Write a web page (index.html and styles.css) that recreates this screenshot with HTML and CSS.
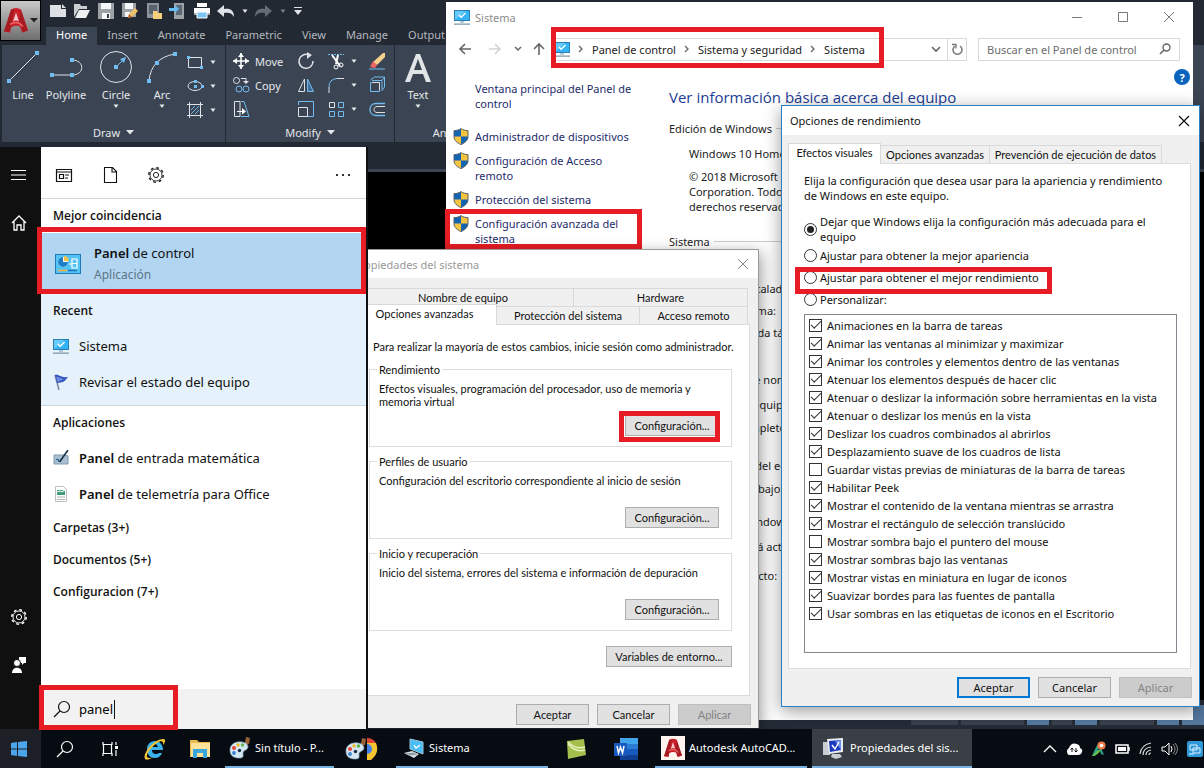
FILE: index.html
```html
<!DOCTYPE html>
<html lang="es">
<head>
<meta charset="utf-8">
<title>Escritorio</title>
<link rel="stylesheet" href="styles.css">
</head>
<body>
<svg class="defs" aria-hidden="true">
  <symbol id="monitor" viewBox="0 0 16 16">
    <rect x=".5" y="1.5" width="15" height="10" fill="#35b4f5" stroke="#2a7db5"/>
    <path d="M1 11V2h10z" fill="#67cbfa"/>
    <path d="M5 6l2.2 2.3L11.5 4" fill="none" stroke="#fff" stroke-width="1.5"/>
    <path d="M6 13h4M0 15.2h16" stroke="#7d97a8" stroke-width="1.2"/>
  </symbol>
  <symbol id="shield" viewBox="0 0 16 17">
    <path d="M8 .6c2 1.5 4.500 2 7 2v6c0 4-3.500 6.400-7 8-3.500-1.600-7-4-7-8v-6c2.500 0 5-.5 7-2z" fill="#f6c33c"/>
    <path d="M8 .6v8H1v-6c2.500 0 5-.5 7-2zM8 8.600h7c0 4-3.500 6.400-7 8z" fill="#1464b4"/>
    <path d="M8 .6c2 1.500 4.500 2 7 2v6c0 4-3.500 6.400-7 8-3.500-1.600-7-4-7-8v-6c2.500 0 5-.5 7-2z" fill="none" stroke="#56606a"/>
  </symbol>
  <symbol id="gear" viewBox="0 0 18 18">
    <circle cx="9" cy="9" r="7.200" fill="none" stroke="currentColor" stroke-width="1.500" stroke-dasharray="2.800 2.855"/>
    <circle cx="9" cy="9" r="6" fill="none" stroke="currentColor" stroke-width=".9"/>
    <circle cx="9" cy="9" r="2.600" fill="none" stroke="currentColor"/>
  </symbol>
  <symbol id="lens" viewBox="0 0 18 18">
    <circle cx="11" cy="7" r="5.500" fill="none" stroke="currentColor" stroke-width="1.200"/>
    <path d="M7 11l-6 6" stroke="currentColor" stroke-width="1.200"/>
  </symbol>
  <symbol id="acad" viewBox="0 0 24 26">
    <path d="M0 24L7 2q5-3 10 0l7 21-6 2-2-6q-5-2-9 1l-1 5z" fill="#c8202b"/>
    <path d="M9 14q3-2 6 0l-3-9z" fill="#fff" opacity=".75"/>
    <path d="M0 24L7 2l3 0-4 22zM15 13l4 12 5-2L17 3z" fill="#8d151c" opacity=".55"/>
    <path d="M6 17q7-5 13 2" fill="none" stroke="#ee6b66" stroke-width="1.500"/>
  </symbol>
  <symbol id="paint" viewBox="0 0 22 22">
    <path d="M13 13l5-12 2 0 0 3-5 11z" fill="#c98a4d"/>
    <path d="M16 6l1-6 4 1-1 6z" fill="#9b6238"/>
    <path d="M1 13C1 7 7 4 13 5c6 1 7 5 5 7s-4 1-4 4 1 5-4 5S1 19 1 13z" fill="#d5e7f3" stroke="#8aa9bd" stroke-width=".7"/>
    <circle cx="5" cy="11" r="2" fill="#e6473a"/><circle cx="9" cy="8" r="1.800" fill="#f0bd2f"/><circle cx="13.500" cy="8" r="1.700" fill="#61b448"/><circle cx="5" cy="16" r="1.900" fill="#3b83d5"/><circle cx="10.500" cy="13.500" r="1.700" fill="#152c47"/>
  </symbol>
  <symbol id="down" viewBox="0 0 8 5"><path d="M1.500 .5h5L4 4z" fill="currentColor"/></symbol>
  <symbol id="down-wide" viewBox="0 0 8 5"><path d="M0 0h8L4 4.500z" fill="currentColor"/></symbol>
</svg>

<main class="desktop">
  <section class="cad" aria-label="AutoCAD">
    <header class="cad-head">
      <button class="cad-logo" aria-label="AutoCAD"><svg width="24" height="27"><use href="#acad"/></svg><svg width="8" height="5"><use href="#down-wide"/></svg></button>
      <div class="cad-top">
        <div class="quick">
          <svg width="18" height="16"><path d="M1 2h11v4h5v8H1zM13 1l4 4h-4z" fill="#dde1e5"/></svg>
          <svg width="18" height="16"><path d="M1 14V1h6l1 2h6v3H6z" fill="#c9cdd1"/><path d="M2 15L6 7h11l-4 8z" fill="#eef0f2"/></svg>
          <svg width="18" height="16"><path d="M1 0h16v16H1z" fill="#9da2a7"/><path d="M4 0h10v6H4zM5 10h8v6H5z" fill="#f6f7f8"/><path d="M10 11h2v4h-2z" fill="#333b47"/></svg>
          <svg width="18" height="16"><path d="M1 0h14v14H1z" fill="#9da2a7"/><path d="M4 0h8v6H4zM4 9h5v5H4z" fill="#f6f7f8"/><path d="M7 15l1-4 6-6 3 3-6 6z" fill="#f0c26c"/><path d="M7 15l1-4 3 3z" fill="#b9552e"/></svg>
          <svg width="18" height="16"><path d="M2 0h12v15H2z" fill="#8e949a"/><path d="M4 2h8v9H4z" fill="#596473"/><path d="M8 16V8h4l1 2h4v6z" fill="#f7cf7b"/></svg>
          <svg width="18" height="16"><path d="M5 0h10v16H5z" fill="#9da2a7"/><path d="M7 2h6v10H7z" fill="#5b6878"/><path d="M0 5h6V2l4 4-4 4V8H0z" fill="#67bdf2"/></svg>
          <svg width="18" height="16"><path d="M4 0h10v4H4zM1 5h16v7H1z" fill="#fff"/><path d="M1 10h16v2H1z" fill="#a9aeb4"/><path d="M4 9h10v6H4z" fill="#7cc4f5" stroke="#fff"/></svg>
          <svg width="18" height="16"><path d="M0 8l7-6v4c6-1 10 1 10 8-2-4-5-5-10-4v4z" fill="#dfe2e6"/></svg>
          <svg width="8" height="5"><use href="#down"/></svg>
          <svg width="18" height="16"><path d="M17 8l-7-6v4C4 5 0 7 0 14c2-4 5-5 10-4v4z" fill="#646c77"/></svg>
          <svg class="dim" width="8" height="5"><use href="#down"/></svg>
          <svg width="10" height="10"><path d="M1 1h8v1H1zM1 4h8L5 9z" fill="#dfe2e6"/></svg>
        </div>
        <nav class="cad-tabs">
          <a href="#" class="on">Home</a><a href="#">Insert</a><a href="#">Annotate</a><a href="#">Parametric</a><a href="#">View</a><a href="#">Manage</a><a href="#">Output</a>
        </nav>
      </div>
    </header>
    <div class="ribbon">
      <section class="panel draw">
        <div class="tools">
          <button class="big w42"><svg width="34" height="34"><path d="M3 31L31 3" stroke="#dfe3e7"/><path d="M1 29h4v4H1zM29 1h4v4h-4z" fill="#71bdf2"/></svg>Line</button>
          <button class="big w44"><svg width="34" height="34"><path d="M3 25h20c13 0 13-15 0-15" fill="none" stroke="#dfe3e7"/><path d="M1 23h4v4H1zM21 23h4v4h-4zM21 8h4v4h-4z" fill="#71bdf2"/></svg>Polyline</button>
          <button class="big w56"><svg width="34" height="34"><circle cx="17" cy="17" r="15.500" fill="none" stroke="#dfe3e7"/><path d="M17 17l8-8" stroke="#71bdf2"/><path d="M15 15h4v4h-4zM21 9l6-2-2 6z" fill="#71bdf2"/></svg>Circle<svg width="8" height="5"><use href="#down"/></svg></button>
          <button class="big w36"><svg width="34" height="34"><path d="M4 31Q6 8 30 4" fill="none" stroke="#dfe3e7"/><path d="M2 29h4v4H2zM10 11h4v4h-4zM28 2h4v4h-4z" fill="#71bdf2"/></svg>Arc<svg width="8" height="5"><use href="#down"/></svg></button>
          <div class="small-col">
            <button aria-label="Rectangle"><svg width="18" height="18"><path d="M2.500 4.500h13v10h-13z" fill="none" stroke="#dfe3e7"/><path d="M1 3h3v3H1zM14 13h3v3h-3z" fill="#71bdf2"/></svg><svg width="8" height="5"><use href="#down"/></svg></button>
            <button aria-label="Ellipse"><svg width="18" height="18"><ellipse cx="9" cy="9" rx="7" ry="4.500" fill="none" stroke="#dfe3e7"/><path d="M8 8h3v3H8zM15 8h3v3h-3zM8 3h3v3H8z" fill="#71bdf2"/></svg><svg width="8" height="5"><use href="#down"/></svg></button>
            <button aria-label="Hatch"><svg width="18" height="18"><path d="M1 3.500h16M1 14.500h16M3.500 1v16M14.500 1v16" stroke="#dfe3e7"/><path d="M5 9l4-4M5 13l8-8M9 13l4-4" stroke="#71bdf2"/></svg><svg width="8" height="5"><use href="#down"/></svg></button>
          </div>
        </div>
        <h2>Draw <svg width="8" height="5"><use href="#down-wide"/></svg></h2>
      </section>
      <section class="panel modify">
        <div class="grid">
          <button><svg width="18" height="18"><path d="M9 1v16M1 9h16" stroke="#fff" stroke-width="1.500"/><path d="M9 1L6 5h6zM9 17l-3-4h6zM1 9l4-3v6zM17 9l-4-3v6z" fill="#fff"/></svg>Move</button>
          <button aria-label="Rotate"><svg width="18" height="18"><path d="M12 3a7 7 0 1 0 4 6" fill="none" stroke="#dfe3e7" stroke-width="1.500"/><path d="M10 0l5 3-5 4z" fill="#dfe3e7"/></svg></button>
          <button aria-label="Trim"><svg width="18" height="18"><path d="M1 2.500h16" stroke="#71bdf2" stroke-dasharray="2 1"/><path d="M5 3l8 11M11 3L9 12" stroke="#fff" stroke-width="2"/><circle cx="14" cy="13" r="2" fill="none" stroke="#fff"/><circle cx="9" cy="15" r="2" fill="none" stroke="#fff"/></svg><svg width="8" height="5"><use href="#down"/></svg></button>
          <button aria-label="Erase"><svg width="18" height="18"><path d="M15 1h2v4l-8 8-4-3z" fill="#f8d28a"/><path d="M5 9l4 4-2 3-5-1z" fill="#ed6464"/><path d="M1 17h16" stroke="#71bdf2"/></svg></button>
          <button><svg width="18" height="18"><g fill="none" stroke="#dfe3e7"><circle cx="4.500" cy="4.500" r="3"/><path d="M9 2.500h5v4"/></g><path d="M11 5h6l-3 3z" fill="#dfe3e7"/><g fill="none" stroke="#71bdf2"><circle cx="7" cy="13" r="3"/><circle cx="14" cy="13" r="3"/></g></svg>Copy</button>
          <button aria-label="Mirror"><svg width="18" height="18"><path d="M7.500 3v12.500h-6z" fill="none" stroke="#dfe3e7"/><path d="M10.500 3v12.500h6z" fill="#3f6f95" stroke="#71bdf2"/></svg></button>
          <button aria-label="Fillet"><svg width="18" height="18"><path d="M2 17v-6M10 2.500h7" stroke="#dfe3e7"/><path d="M2 11Q2 3 10 2.500" fill="none" stroke="#71bdf2"/></svg><svg width="8" height="5"><use href="#down"/></svg></button>
          <button aria-label="Explode"><svg width="18" height="18"><path d="M2.500 6.500h9v9h-9zM2.500 4l4-3h10v10l-3 4M4 4.500h10v9M14 4l3-3" fill="none" stroke="#71bdf2"/><path d="M4.500 6.500h7v8" fill="none" stroke="#dfe3e7"/></svg></button>
          <button aria-label="Stretch"><svg width="18" height="18"><path d="M8 1.500H2.500v15H8V1.500" fill="none" stroke="#dfe3e7"/><path d="M9 1.500h3l5 15H9" fill="none" stroke="#71bdf2"/><path d="M5 11.500h6" stroke="#fff"/><path d="M10 8l4 3.500-4 3z" fill="#fff"/></svg></button>
          <button aria-label="Scale"><svg width="18" height="18"><path d="M1.500 5V1.500h15v15H10" fill="none" stroke="#71bdf2"/><path d="M1.500 7.500h9v9h-9z" fill="none" stroke="#dfe3e7"/></svg></button>
          <button aria-label="Array"><svg width="18" height="18"><path d="M2.500 2.500h5v5h-5z" fill="none" stroke="#dfe3e7"/><path d="M11.500 2.500h5v5h-5zM2.500 11.500h5v5h-5zM11.500 11.500h5v5h-5z" fill="none" stroke="#71bdf2"/></svg><svg width="8" height="5"><use href="#down"/></svg></button>
          <button aria-label="Offset"><svg width="18" height="18"><path d="M17 3.500H8c-8 0-8 12 0 12h9" fill="none" stroke="#71bdf2" stroke-width="1.300"/><path d="M17 6.500H9c-4 0-4 6 0 6h8" fill="none" stroke="#dfe3e7"/></svg></button>
        </div>
        <h2>Modify <svg width="8" height="5"><use href="#down-wide"/></svg></h2>
      </section>
      <section class="panel annot">
        <div class="tools">
          <button class="big w46"><svg width="28" height="34"><path d="M1 32L12 4h4l11 28h-5l-3-8H9l-3 8zM10 20h8L14 9z" fill="#e2e5e8"/></svg>Text<svg width="8" height="5"><use href="#down"/></svg></button>
          <button class="big w64"><svg width="34" height="34"></svg>Dimension</button>
        </div>
        <h2>Annotation</h2>
      </section>
    </div>
    <div class="file-tabs"></div>
    <div class="status"><i class="s1"></i><i class="s2"></i><i class="s3"></i><i class="s4"></i><i class="s5"></i><i class="s6"></i><i class="s3"></i><i class="s7"></i></div>
  </section>

  <section class="win sistema" aria-label="Sistema">
    <header class="title">
      <svg width="16" height="16"><use href="#monitor"/></svg><span>Sistema</span>
      <button aria-label="Minimizar"><svg width="12" height="12"><path d="M1 6.500h10" stroke="#777"/></svg></button>
      <button aria-label="Maximizar"><svg width="12" height="12"><path d="M1.500 1.500h9v9h-9z" fill="none" stroke="#777"/></svg></button>
      <button aria-label="Cerrar"><svg width="12" height="12"><path d="M1 1l10 10M11 1L1 11" stroke="#777"/></svg></button>
    </header>
    <div class="navrow">
      <button aria-label="Atrás"><svg width="14" height="14"><path d="M13 7H2M7 2L2 7l5 5" fill="none" stroke="#666" stroke-width="1.600"/></svg></button>
      <button aria-label="Adelante"><svg width="14" height="14"><path d="M1 7h11M7 2l5 5-5 5" fill="none" stroke="#d3d3d3" stroke-width="1.600"/></svg></button>
      <button class="tiny" aria-label="Recientes"><svg width="8" height="6"><path d="M1 1l3 3 3-3" fill="none" stroke="#666" stroke-width="1.500"/></svg></button>
      <button aria-label="Arriba"><svg width="14" height="14"><path d="M7 13V2M2 7l5-5 5 5" fill="none" stroke="#666" stroke-width="1.600"/></svg></button>
      <div class="address">
        <svg width="16" height="16"><use href="#monitor"/></svg>
        <svg class="sep" width="6" height="8"><path d="M1 1l3 3-3 3" fill="none" stroke="#666" stroke-width="1.300"/></svg>
        <a href="#">Panel de control</a>
        <svg class="sep" width="6" height="8"><path d="M1 1l3 3-3 3" fill="none" stroke="#666" stroke-width="1.300"/></svg>
        <a href="#">Sistema y seguridad</a>
        <svg class="sep" width="6" height="8"><path d="M1 1l3 3-3 3" fill="none" stroke="#666" stroke-width="1.300"/></svg>
        <a href="#">Sistema</a>
        <button class="drop" aria-label="Ubicaciones"><svg width="10" height="7"><path d="M1 1l4 4 4-4" fill="none" stroke="#666" stroke-width="1.600"/></svg></button>
        <button class="refresh" aria-label="Actualizar"><svg width="12" height="12"><path d="M9 3a4.500 4.500 0 1 1-5 0" fill="none" stroke="#777" stroke-width="1.500"/><path d="M1 1.500h4v4" fill="none" stroke="#777" stroke-width="1.300"/></svg></button>
      </div>
      <label class="find"><input type="text" placeholder="Buscar en el Panel de control" aria-label="Buscar en el Panel de control"><svg width="12" height="12" viewBox="0 0 12 12"><circle cx="7.500" cy="4.500" r="3.500" fill="none" stroke="#666" stroke-width="1.400"/><path d="M5 7l-4 4" stroke="#666" stroke-width="1.600"/></svg></label>
    </div>
    <div class="sys-body">
      <nav class="side">
        <a href="#">Ventana principal del Panel de control</a>
        <a href="#" class="first"><svg width="16" height="17"><use href="#shield"/></svg>Administrador de dispositivos</a>
        <a href="#"><svg width="16" height="17"><use href="#shield"/></svg>Configuración de Acceso remoto</a>
        <a href="#"><svg width="16" height="17"><use href="#shield"/></svg>Protección del sistema</a>
        <a href="#"><svg width="16" height="17"><use href="#shield"/></svg>Configuración avanzada del sistema</a>
      </nav>
      <div class="info">
        <button class="help" aria-label="Ayuda">?</button>
        <h1>Ver información básica acerca del equipo</h1>
        <h3>Edición de Windows</h3>
        <p>Windows 10 Home</p>
        <p class="copy">© 2018 Microsoft Corporation. Todos los derechos reservados.</p>
        <h3>Sistema</h3>
        <ul>
          <li class="r1">Memoria instalada</li>
          <li class="r2">Tipo de sistema:</li>
          <li class="r3">Lápiz y entrada táctil</li>
          <li class="r4 group">Configuración de nombre</li>
          <li class="r5">Nombre de equipo:</li>
          <li class="r6">Nombre completo:</li>
          <li class="r7">Descripción del equipo</li>
          <li class="r8">Grupo de trabajo:</li>
          <li class="r9 group">Activación de Windows</li>
          <li class="r10">Windows está activado</li>
          <li class="r11">Id. del producto:</li>
        </ul>
      </div>
    </div>
  </section>
  <div class="mark m-address"></div>
  <div class="mark m-advanced"></div>

  <section class="win props" aria-label="Propiedades del sistema">
    <header class="title"><span>Propiedades del sistema</span><button aria-label="Cerrar"><svg width="12" height="12"><path d="M1 1l10 10M11 1L1 11" stroke="#888"/></svg></button></header>
    <div class="tabs back"><button>Nombre de equipo</button><button>Hardware</button></div>
    <div class="tabs front"><button class="on">Opciones avanzadas</button><button>Protección del sistema</button><button>Acceso remoto</button></div>
    <div class="page">
      <p class="intro">Para realizar la mayoría de estos cambios, inicie sesión como administrador.</p>
      <fieldset><legend>Rendimiento</legend><p>Efectos visuales, programación del procesador, uso de memoria y memoria virtual</p><button class="btn">Configuración...</button></fieldset>
      <fieldset><legend>Perfiles de usuario</legend><p>Configuración del escritorio correspondiente al inicio de sesión</p><button class="btn">Configuración...</button></fieldset>
      <fieldset><legend>Inicio y recuperación</legend><p>Inicio del sistema, errores del sistema e información de depuración</p><button class="btn">Configuración...</button></fieldset>
      <button class="btn env">Variables de entorno...</button>
    </div>
    <footer><button class="btn">Aceptar</button><button class="btn">Cancelar</button><button class="btn" disabled>Aplicar</button></footer>
  </section>
  <div class="mark m-config"></div>

  <section class="win perf" aria-label="Opciones de rendimiento">
    <header class="title"><span>Opciones de rendimiento</span><button aria-label="Cerrar"><svg width="12" height="12"><path d="M1 1l10 10M11 1L1 11" stroke="#111" stroke-width="1.200"/></svg></button></header>
    <div class="tabs front"><button class="on">Efectos visuales</button><button>Opciones avanzadas</button><button>Prevención de ejecución de datos</button></div>
    <div class="page">
      <p>Elija la configuración que desea usar para la apariencia y rendimiento de Windows en este equipo.</p>
      <div class="radios">
        <label><input type="radio" name="fx" checked><span>Dejar que Windows elija la configuración más adecuada para el equipo</span></label>
        <label><input type="radio" name="fx"><span>Ajustar para obtener la mejor apariencia</span></label>
        <label><input type="radio" name="fx"><span>Ajustar para obtener el mejor rendimiento</span></label>
        <label><input type="radio" name="fx"><span>Personalizar:</span></label>
      </div>
      <div class="checks">
        <label><input type="checkbox" checked>Animaciones en la barra de tareas</label>
        <label><input type="checkbox" checked>Animar las ventanas al minimizar y maximizar</label>
        <label><input type="checkbox" checked>Animar los controles y elementos dentro de las ventanas</label>
        <label><input type="checkbox" checked>Atenuar los elementos después de hacer clic</label>
        <label><input type="checkbox" checked>Atenuar o deslizar la información sobre herramientas en la vista</label>
        <label><input type="checkbox" checked>Atenuar o deslizar los menús en la vista</label>
        <label><input type="checkbox" checked>Deslizar los cuadros combinados al abrirlos</label>
        <label><input type="checkbox" checked>Desplazamiento suave de los cuadros de lista</label>
        <label><input type="checkbox">Guardar vistas previas de miniaturas de la barra de tareas</label>
        <label><input type="checkbox" checked>Habilitar Peek</label>
        <label><input type="checkbox" checked>Mostrar el contenido de la ventana mientras se arrastra</label>
        <label><input type="checkbox" checked>Mostrar el rectángulo de selección translúcido</label>
        <label><input type="checkbox">Mostrar sombra bajo el puntero del mouse</label>
        <label><input type="checkbox" checked>Mostrar sombras bajo las ventanas</label>
        <label><input type="checkbox" checked>Mostrar vistas en miniatura en lugar de iconos</label>
        <label><input type="checkbox" checked>Suavizar bordes para las fuentes de pantalla</label>
        <label><input type="checkbox" checked>Usar sombras en las etiquetas de iconos en el Escritorio</label>
      </div>
    </div>
    <footer><button class="btn default">Aceptar</button><button class="btn">Cancelar</button><button class="btn" disabled>Aplicar</button></footer>
  </section>
  <div class="mark m-perf"></div>

  <section class="start" aria-label="Búsqueda">
    <nav class="rail">
      <button aria-label="Menú"><svg width="18" height="18"><path d="M1 4.500h15M1 9h15M1 13.500h15" stroke="#fff" stroke-width="1.200"/></svg></button>
      <button aria-label="Inicio"><svg width="18" height="18"><path d="M2 9l7-7 7 7M4 7v9h3v-5h4v5h3V7" fill="none" stroke="#fff" stroke-width="1.300"/></svg></button>
      <span class="grow"></span>
      <button aria-label="Configuración"><svg width="18" height="18"><use href="#gear"/></svg></button>
      <button aria-label="Comentarios"><svg width="18" height="18"><path d="M9 1h7v6h-2l-2 2V7H9z" fill="#fff"/><circle cx="7" cy="7" r="3.500" fill="#fff" stroke="#101010"/><path d="M2 17c0-7 10-7 10 0z" fill="#fff"/></svg></button>
    </nav>
    <div class="results">
      <div class="filters">
        <button aria-label="Aplicaciones"><svg width="18" height="18"><path d="M1.500 3.500h15v12h-15zM1.500 6h15M4.500 8.500h4v4h-4zM10 9h4M10 12h3" fill="none" stroke="#111" stroke-width="1.200"/></svg></button>
        <button aria-label="Documentos"><svg width="18" height="18"><path d="M3.500 1.500h8l4 4v11h-12zM11 2v4h4" fill="none" stroke="#111" stroke-width="1.100"/></svg></button>
        <button aria-label="Configuración"><svg width="18" height="18"><use href="#gear"/></svg></button>
        <span class="grow"></span>
        <button aria-label="Más"><svg width="18" height="18"><path d="M2 8h2v2H2zM8 8h2v2H8zM14 8h2v2h-2z" fill="#333"/></svg></button>
      </div>
      <h3 class="tall">Mejor coincidencia</h3>
      <a href="#" class="best">
        <svg width="26" height="20"><rect x=".5" y=".5" width="25" height="19" fill="#54c4f7" stroke="#1e78b4"/><circle cx="8" cy="8" r="5" fill="#fff"/><path d="M8 8V3a5 5 0 1 0 5 5z" fill="#1f7fc4"/><path d="M9 7V2a5 5 0 0 1 5 5z" fill="#f6c04d"/><path d="M14 10h3V5h5v9h-5v-9M17 9.500h5" fill="none" stroke="#fff" stroke-width="1.200"/><path d="M3 16.500h9" stroke="#f6b23c" stroke-width="1.500"/><path d="M13 16.500h9" stroke="#1b72b5" stroke-width="1.500"/></svg>
        <span><b>Panel</b> de control<small>Aplicación</small></span>
      </a>
      <div class="recent">
        <h3 class="tall">Recent</h3>
        <a href="#"><svg width="16" height="16"><use href="#monitor"/></svg>Sistema</a>
        <a href="#"><svg width="16" height="16"><path d="M2 1l4 15" stroke="#7887a5" stroke-width="1.500"/><path d="M2 1c4-1 5 3 13 2-2 2-3 6-11 6z" fill="#3658bd"/><path d="M3 3c4 0 5 2 8 2l-6 3z" fill="#6f8ce0"/></svg>Revisar el estado del equipo</a>
      </div>
      <h3 class="tall">Aplicaciones</h3>
      <a href="#"><svg width="16" height="16"><path d="M1 5h10l4 1v8H1z" fill="#a9bfd2" stroke="#8299ad"/><path d="M3 10l2-1 1 3 3-4" fill="none" stroke="#174d80"/><path d="M15 0L8 10l-1 2" stroke="#1b344c" stroke-width="1.600"/></svg><span><b>Panel</b> de entrada matemática</span></a>
      <a href="#"><svg width="16" height="16"><path d="M2.500.5h8l3 3v12h-11z" fill="#fff" stroke="#b9c0c0"/><path d="M4 4h5l3 1v4H4z" fill="#3c9b76"/><path d="M4 6l3-1 2 1 3-2" stroke="#fff" fill="none"/><path d="M4 11h8M4 13.500h8" stroke="#adb5b5"/></svg><span><b>Panel</b> de telemetría para Office</span></a>
      <h3>Carpetas (3+)</h3>
      <h3>Documentos (5+)</h3>
      <h3>Configuracion (7+)</h3>
      <label class="query"><svg width="18" height="18"><use href="#lens"/></svg><input type="text" value="panel" aria-label="Buscar"></label>
    </div>
  </section>
  <div class="mark m-best"></div>

  <footer class="taskbar">
    <button class="win-btn" aria-label="Inicio"><svg width="16" height="16"><path d="M0 2l6-1v6.500H0zM7 1l9-1v7.500H7zM0 8.500h6V15l-6-1zM7 8.500h9V16l-9-1z" fill="#4aa5ea"/></svg></button>
    <button class="ico" aria-label="Buscar"><svg width="18" height="18"><use href="#lens"/></svg></button>
    <button class="ico" aria-label="Vista de tareas"><svg width="18" height="18"><path d="M2 2v2.500h9V2M2 16v-2.500h9V16M2.500 5v8M10.500 5v8M15 2v3M15 10v6" fill="none" stroke="#fff" stroke-width="1.200"/><path d="M14 6h3v3h-3z" fill="#fff"/></svg></button>
    <button class="ico" aria-label="Internet Explorer"><svg width="24" height="24"><path d="M19 16q-2 5-7 5c-6 0-8-5-8-9s3-8 8-8 8 4 8 9H9q0 4 4 4 2 0 3-1zM9 10h6q-1-3-3-3t-3 3z" fill="#3ab2ee"/><path d="M2 22C-1 16 12 1 21 2c2 1 1 4-1 6 1-4-2-5-6-2C8 10 3 17 4 20q2 2 6 0-5 4-8 2z" fill="#f2c535"/></svg></button>
    <button class="ico" aria-label="Explorador"><svg width="20" height="20"><path d="M0 1h7l2 2h11v15H0z" fill="#e9b94a"/><path d="M1 4h19v14H1z" fill="#fbe29a"/><path d="M3 19v-9h14v9h-4v-5H7v5z" fill="#3ba7dc"/></svg></button>
    <button class="task t-paint"><svg width="22" height="22"><use href="#paint"/></svg>Sin título - P...</button>
    <button class="task t-chrome" aria-label="Chrome"><svg width="22" height="22"><use href="#paint"/></svg><svg width="11" height="22"><path d="M0 0q6 0 9 5H0z" fill="#dd4637"/><path d="M0 5h9q4 10-5 17H0z" fill="#f7c431"/><path d="M0 6a5 5 0 0 1 0 10z" fill="#3e7fe8"/></svg></button>
    <button class="task t-sys"><svg width="22" height="22"><path d="M7 2l13 3v12L7 12z" fill="#49bdf6" stroke="#9fc3d8"/><path d="M11 8l2 3 4-3" fill="none" stroke="#fff" stroke-width="1.300"/><path d="M1 16l8-2 7 3-5 4z" fill="#dce3e8"/><path d="M3 17l9-1M6 18l8-1" stroke="#7f8b95"/></svg>Sistema</button>
    <button class="ico green" aria-label="Camtasia"><svg width="22" height="22"><path d="M2 3l17-2 2 16-18 4z" fill="#a5bf4c"/><path d="M3 6q8 9 17 6M3 4q8 8 17 5" fill="none" stroke="#e7efbd" stroke-width="1.500"/></svg></button>
    <button class="ico word" aria-label="Word"><svg width="24" height="24"><path d="M6 1h18v22H6z" fill="#2b7cd3"/><path d="M6 1h18v6H6z" fill="#41a5ee"/><path d="M6 12h18v6H6z" fill="#185abd"/><path d="M6 18h18v5H6z" fill="#103f91"/><path d="M0 6h13v13H0z" fill="#185abd"/><path d="M3 9l1.500 7 2-6 2 6L10 9" fill="none" stroke="#fff" stroke-width="1.500"/></svg></button>
    <button class="task t-cad"><svg width="24" height="24" viewBox="-4 -3 32 32"><path d="M-4-3h32v32H-4z" fill="#fff3ef"/><use href="#acad" width="24" height="26"/></svg>Autodesk AutoCAD...</button>
    <button class="task t-props"><svg width="24" height="22"><path d="M1 5h7v13H1z" fill="#c9ced2"/><path d="M5 2l16-1v14L7 17z" fill="#e9edf0"/><path d="M7 4l12-1v10L8 15z" fill="#1b39bd"/><path d="M13 4l6-1v10z" fill="#6d8df0"/><path d="M10 8l3 4 4-7" fill="none" stroke="#fff" stroke-width="1.500"/><path d="M10 17h8l2 3-6 2-5-2z" fill="#c9ced2"/></svg>Propiedades del sis...</button>
    <div class="tray">
      <svg width="14" height="10"><path d="M1 8l6-6 6 6" fill="none" stroke="#fff" stroke-width="1.300"/></svg>
      <svg width="18" height="14"><path d="M4 13a4 4 0 0 1 0-7q2-6 8-4 3 1 3 4 3 1 2 4-1 3-4 3z" fill="#fff"/><path d="M7 10V6M5.500 7.500L7 6l1.500 1.500M11 6v4M9.500 8.500L11 10l1.500-1.500" fill="none" stroke="#111"/></svg>
      <svg width="16" height="16"><path d="M1 15Q6 3 8 2l5 12-3-1-2-6-4 8z" fill="#29a287"/><path d="M1 15q5 0 9-6l-3 0z" fill="#6bbf4a"/><circle cx="10.500" cy="4.500" r="4" fill="#ef7b4a"/><circle cx="10.500" cy="4.500" r="1.800" fill="#fff"/></svg>
      <svg width="16" height="10"><path d="M1 1h12v8H1zM14 3v4" fill="none" stroke="#fff" stroke-width="1.500"/><path d="M3 3h8v4H3z" fill="#fff"/></svg>
      <svg width="14" height="14"><path d="M1 12Q2 3 12 1M4 13q0-7 8-8M7 13q0-4 5-5M10 13q0-2 2-2" fill="none" stroke="#ddd" stroke-width="1.200"/></svg>
      <svg width="18" height="14"><path d="M1 5h3l4-4v12L4 9H1z" fill="none" stroke="#fff"/><path d="M10 4q2 3 0 6" fill="none" stroke="#fff"/><path d="M12 2q4 5 0 10M14 1q5 6 0 12" fill="none" stroke="#888"/></svg>
      <svg width="16" height="16"><rect width="16" height="16" rx="2" fill="#2f97d8"/><path d="M3 4h7v5H3zM6 7h7v5H6z" fill="none" stroke="#d9efff"/><path d="M2 13h5" stroke="#83d1ff" stroke-width="2"/></svg>
    </div>
  </footer>
  <div class="mark m-query"></div>
</main>
</body>
</html>
```
FILE: styles.css
```css
* { box-sizing: border-box; }
body { margin: 0; background: #fff; font: 11px/15px "Noto Sans", "Open Sans", sans-serif; color: #111; }
button { font: inherit; color: inherit; background: none; border: 0; padding: 0; white-space: nowrap; }
a { color: inherit; text-decoration: none; }
h1, h2, h3, p, ul { margin: 0; padding: 0; font-weight: 400; font-size: inherit; list-style: none; }
svg { display: block; flex: none; }
.defs { position: absolute; width: 0; height: 0; }
.grow { flex: 1; }
.desktop { position: relative; height: calc(100vh - 4px); min-height: 768px; overflow: hidden; background: #000; display: flex; flex-direction: column; }

/* AutoCAD */
.cad { flex: 1; display: flex; flex-direction: column; background: #000; color: #e4e7ea; overflow: hidden; }
.cad-head { display: flex; background: #222933; height: 45px; }
.cad-logo { width: 41px; height: 41px; margin-right: 5px; border: 1px solid #000; background: linear-gradient(#c9c9c9, #6e6e6e); display: flex; align-items: center; justify-content: center; gap: 2px; color: #222; }
.cad-top { display: flex; flex-direction: column; }
.quick { display: flex; align-items: center; gap: 6px; height: 22px; padding-left: 3px; margin-bottom: 5px; }
.dim { color: #777e88; }
.cad-tabs { display: flex; color: #b3b8be; line-height: 16px; }
.cad-tabs a { padding: 0 10px 2px; }
.cad-tabs a.on { background: #3b4453; color: #fff; }
.ribbon { display: flex; height: 97px; background: #3b4453; border-left: 2px solid #222933; overflow: hidden; }
.panel { display: flex; flex-direction: column; justify-content: space-between; border-right: 1px solid #222933; flex: none; }
.draw { width: 224px; }
.modify { width: 169px; }
.annot { width: 134px; }
.panel h2 { display: flex; align-items: center; justify-content: center; gap: 6px; height: 19px; }
.tools { display: flex; padding-top: 5px; align-items: flex-start; }
.big { display: flex; flex-direction: column; align-items: center; flex: none; line-height: 18px; }
.big > svg:first-child { margin-bottom: 2px; }
.w42 { width: 42px; } .w44 { width: 44px; } .w56 { width: 56px; } .w36 { width: 36px; } .w46 { width: 46px; } .w64 { width: 64px; }
.small-col { padding: 0 0 0 6px; }
.small-col button, .grid button { display: flex; align-items: center; gap: 5px; height: 24px; }
.grid { display: grid; grid-template-columns: 65px 30px 41px 18px; padding: 4px 0 0 6px; }
.file-tabs { height: 30px; background: #222933; border-bottom: 3px solid #3b4453; }
.status { margin-top: auto; height: 29px; background: #252c37; display: flex; justify-content: flex-end; align-items: flex-end; gap: 3px; padding-bottom: 4px; }
.status i { height: 20px; background: #3a414c; }
.s1 { width: 47px; } .s2 { width: 63px; } .s4 { width: 20px; } .s5, .s3 { width: 22px; } .s6 { width: 54px; } .s7 { width: 22px; }
.status .s3, .status .s5, .status .s7 { background: #55799f; }

/* Ventanas */
.win { position: absolute; display: flex; flex-direction: column; background: #f0f0f0; }
.title { display: flex; align-items: center; height: 30px; background: #fff; }
.title span { flex: 1; }
.btn { height: 21px; min-width: 73px; background: #e1e1e1; border: 1px solid #adadad; color: #111; }
.btn:disabled { background: #ccc; border-color: #bfbfbf; color: #838383; }
.btn.default { border: 2px solid #0078d7; }
.win > footer { display: flex; justify-content: flex-end; gap: 8px; padding: 8px 7px 3px 0; }
.tabs { display: flex; align-items: flex-end; font-family: Lato, "Noto Sans", sans-serif; }
.tabs button { background: #f0f0f0; border: 1px solid #d9d9d9; border-bottom: 0; height: 18px; }
.tabs button + button { border-left: 0; }
.tabs .on { background: #fff; height: 21px; padding-bottom: 4px; margin-bottom: -1px; position: relative; }
.page { background: #fff; border: 1px solid #dcdcdc; }

/* Sistema */
.sistema { left: 446px; top: 2px; width: 747px; height: 718px; background: #fff; color: #222; }
.sistema .title { padding: 0 14px 0 8px; gap: 5px; color: #8b8b8b; }
.sistema .title button { width: 16px; margin-left: 25px; }
.navrow { display: flex; align-items: center; height: 34px; padding: 0 13px 0 12px; }
.navrow > button { width: 14px; margin-right: 16px; }
.navrow > .tiny { width: 8px; margin: 0 6px 0 8px; }
.navrow > .tiny + button { margin: 0 5px 0 4px; }
.navrow > button:nth-child(2) { margin-right: 4px; }
.address { display: flex; align-items: center; flex: 1; height: 23px; border: 1px solid #d9d9d9; padding-left: 2px; }
.address .sep { margin: 0 8px; }
.drop { margin-left: auto; }
.refresh { align-self: stretch; width: 19px; margin-left: 6px; border-left: 1px solid #d9d9d9; padding-left: 3px; }
.find { display: flex; align-items: center; width: 202px; height: 23px; margin-left: 11px; padding: 0 8px; border: 1px solid #d9d9d9; }
.find input { flex: 1; min-width: 0; border: 0; padding: 0; font: inherit; background: none; }
.find input::placeholder { color: #6d6d6d; opacity: 1; }
.sys-body { display: flex; }
.side { width: 223px; padding: 15px 32px 0 29px; display: flex; flex-direction: column; gap: 9px; color: #1e2b6b; }
.side a { display: flex; }
.side .first { margin-top: 9px; }
.side svg { margin: -1px 6px -1px -22px; }
.info { flex: 1; display: flex; flex-direction: column; position: relative; }
.info h1 { color: #1c3d95; font: 15px/22px "Open Sans", sans-serif; margin-top: 20px; }
.help { position: absolute; right: 3px; top: 3px; width: 16px; height: 16px; border-radius: 50%; background: #0a63bd; color: #fff; font-weight: 700; }
.info h3 { display: flex; align-items: center; gap: 4px; margin: 13px 20px 10px 0; }
.info h3::after { content: ""; flex: 1; border-top: 1px solid #ccc; }
.info p { margin-left: 20px; }
.info .copy { margin: 8px 0 7px 20px; width: 120px; }
.info ul { padding: 22px 0 0 23px; }
.info .group { margin-left: -20px; }
.r1, .r2 { height: 22px; } .r3 { height: 47px; } .r4 { height: 25px; } .r5 { height: 23px; } .r6 { height: 38px; } .r7 { height: 23px; } .r8 { height: 33px; } .r9 { height: 25px; } .r10 { height: 29px; }

/* Propiedades del sistema */
.props { left: 341px; top: 249px; width: 418px; height: 479px; border: 1px solid #999; border-bottom: 0; font: 11px/13px Lato, "Liberation Sans", sans-serif; box-shadow: 2px 4px 14px rgba(0, 0, 0, .4); }
.props .title { height: 28px; padding: 0 9px 0 11px; color: #999; font: 11px/15px "Noto Sans", sans-serif; }
.props .back { margin: 10px 10px 0; }
.props .back button:first-child { width: 222px; }
.props .back button:last-child { flex: 1; }
.props .front { margin: 0 10px; }
.props .front button { flex: 1; }
.props .front .on { flex: none; width: 145px; margin-top: -3px; }
.props .front button:nth-child(2) { flex: none; width: 143px; }
.props .page { margin: 0 8px 0 10px; padding: 15px 17px 0 16px; flex: 1; display: flex; flex-direction: column; }
.intro { margin: 0 0 10px 4px; white-space: nowrap; }
fieldset { margin: 0 0 8px; padding: 6px 12px 10px 9px; border: 1px solid #dcdcdc; min-width: 0; }
fieldset p { min-height: 33px; padding-right: 16px; }
legend { padding: 0 2px; margin-left: -2px; }
fieldset .btn { display: block; width: 94px; margin-left: auto; }
.env { width: 126px; align-self: flex-end; margin-top: 7px; }

/* Opciones de rendimiento */
.perf { left: 781px; top: 105px; width: 419px; height: 602px; border: 1px solid #2a80c4; box-shadow: 0 4px 16px rgba(0, 0, 0, .4); }
.perf .title { height: 29px; padding: 0 9px 0 8px; }
.perf .tabs { margin: 8px 6px 0; }
.perf .tabs .on { width: 93px; }
.perf .tabs button:nth-child(2) { width: 109px; }
.perf .tabs button:nth-child(3) { width: 172px; }
.perf .page { margin: 0 8px 0 6px; padding: 9px 13px 15px 15px; flex: 1; display: flex; flex-direction: column; }
.perf .page > p { padding-right: 8px; }
.radios { margin: 11px 0 4px; }
.radios label { display: flex; align-items: center; gap: 3px; min-height: 22px; }
input[type=radio], input[type=checkbox] { appearance: none; margin: 0; width: 13px; height: 13px; border: 1px solid #333; background: #fff; flex: none; display: grid; place-items: center; }
input[type=radio] { border-radius: 50%; }
input[type=radio]:checked::before { content: ""; width: 7px; height: 7px; border-radius: 50%; background: #222; }
input[type=checkbox]:checked::before { content: ""; width: 9px; height: 4px; border: solid #333; border-width: 0 0 1px 1px; transform: rotate(-45deg); margin-bottom: 3px; }
.checks { flex: 1; border: 1px solid #828790; padding: 1px 4px; }
.checks label { display: flex; align-items: center; gap: 5px; height: 18px; white-space: nowrap; }
.perf > footer { padding-bottom: 8px; }

/* Menú de búsqueda */
.start { position: absolute; left: 0; bottom: 39px; width: 368px; height: 582px; display: flex; border-right: 2px solid #111; background: #fff; font-size: 13px; }
.rail { width: 41px; background: #101010; color: #fff; display: flex; flex-direction: column; align-items: center; padding: 4px 4px 40px 0; }
.rail button { height: 48px; }
.results { flex: 1; display: flex; flex-direction: column; }
.results h3 { font: 600 12px/32px "Open Sans", sans-serif; padding-left: 12px; }
.results .tall { line-height: 34px; }
.filters { display: flex; gap: 28px; padding: 19px 14px 14px; border-bottom: 1px solid #d5d5d5; height: 52px; color: #222; }
.results a { display: flex; align-items: center; gap: 10px; height: 36px; padding-left: 12px; }
.results b { font-weight: 600; }
.results .best { height: 61px; background: #b2d6f1; padding-left: 14px; gap: 13px; line-height: 21px; }
.best small { display: block; font-size: 12px; color: #5d7486; }
.recent { background: #e5f1fb; border-bottom: 1px solid #cbd5dc; padding-bottom: 5px; }
.query { margin-top: auto; height: 40px; background: #f2f2f2; display: flex; align-items: center; gap: 8px; padding-left: 12px; }
.query input { border: 0; border-right: 1px solid #111; background: none; font: inherit; line-height: 19px; padding: 0; width: 36px; }

/* Barra de tareas */
.taskbar { position: relative; display: flex; height: 39px; background: #070c13; color: #fff; flex: none; }
.taskbar button { display: flex; align-items: center; flex: none; height: 39px; }
.win-btn { width: 41px; justify-content: center; background: #1d2127; margin-right: 1px; }
.win-btn svg { margin-right: 4px; }
.ico { width: 45px; justify-content: center; }
.task { gap: 4px; border-bottom: 2px solid #76b3e0; padding: 0 4px; }
.t-paint { width: 109px; margin: 0 8px 0 3px; }
.t-chrome { width: 38px; gap: 0; border: 0; padding: 0 3px; margin-right: 16px; }
.t-sys { width: 152px; padding-left: 7px; }
.green { width: 56px; } .word { width: 44px; margin-right: 7px; }
.t-cad { width: 152px; padding-left: 6px; margin-right: 5px; }
.t-props { width: 160px; padding-left: 10px; background: #3a3f45; }
.tray { margin-left: auto; display: flex; align-items: center; gap: 8px; padding-right: 1px; }

/* Marcas rojas */
.mark { position: absolute; border: 5px solid #e81c24; pointer-events: none; }
.m-address { left: 551px; top: 27px; width: 333px; height: 41px; }
.m-advanced { left: 445px; top: 209px; width: 197px; height: 40px; }
.m-config { left: 619px; top: 411px; width: 101px; height: 31px; }
.m-perf { left: 795px; top: 267px; width: 257px; height: 27px; }
.m-best { left: 37px; top: 227px; width: 329px; height: 67px; }
.m-query { left: 39px; top: 685px; width: 139px; height: 45px; }
```
